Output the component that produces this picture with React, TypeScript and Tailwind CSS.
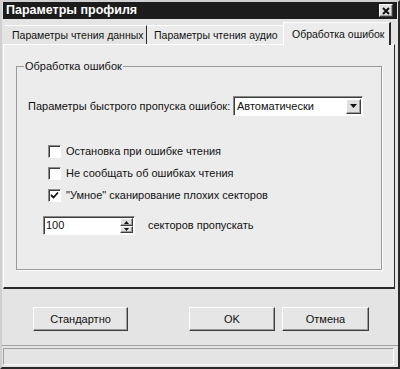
import React from "react";

const raised =
  "border border-t-white border-l-white border-r-[#3c3c3c] border-b-[#3c3c3c] shadow-[inset_-1px_-1px_0_#9c9c9c]";
const sunken =
  "border border-t-[#8a8a8a] border-l-[#8a8a8a] border-r-white border-b-white shadow-[inset_1px_1px_0_#3c3c3c]";

function Check({ checked, label }: { checked?: boolean; label: string }) {
  return (
    <div className="flex h-[22px] items-center pl-[31px]">
      <div className={`w-[13px] h-[13px] bg-white ${sunken} flex items-center justify-center`}>
        {checked && (
          <svg width="9" height="9" viewBox="0 0 9 9">
            <path d="M1 4 L3.5 6.5 L8 1.5" stroke="#111" strokeWidth="1.8" fill="none" />
          </svg>
        )}
      </div>
      <span className="ml-[5px]">{label}</span>
    </div>
  );
}

function Button({ label, w }: { label: string; w: string }) {
  return (
    <div className={`${w} h-[24px] ${raised} bg-[#e6e6e6] flex items-center justify-center`}>
      {label}
    </div>
  );
}

export default function App() {
  return (
    <div className="w-[400px] h-[369px] bg-[#e4e4e4] flex flex-col border-t-2 border-l-2 border-t-[#d0d0d0] border-l-[#cfcfcf] border-r-2 border-b-2 border-r-[#2a2a2a] border-b-[#2a2a2a] text-[11px] leading-[13px] text-[#111] font-['Liberation_Sans',Arial,sans-serif] whitespace-nowrap overflow-hidden">
      {/* Title bar */}
      <div className="h-[17px] mx-[1px] bg-[#1c1c1c] flex items-center justify-between pl-[3px] pr-[4px]">
        <span className="text-white font-bold text-[12.5px]">Параметры профиля</span>
        <div className={`w-[14px] h-[13px] bg-[#e0e0e0] ${raised} flex items-center justify-center`}>
          <svg width="8" height="8" viewBox="0 0 8 8">
            <path d="M1 1 L7 7 M7 1 L1 7" stroke="#111" strokeWidth="2" />
          </svg>
        </div>
      </div>

      {/* Tabs */}
      <div className="mt-[3px] ml-[1px] w-[392px] flex items-end h-[22px] pl-[2px] text-[10.5px]">
        <div className="w-[142px] h-[19px] flex items-center pl-[7px] border-r border-r-[#2a2a2a] border-t border-t-white bg-[#e4e4e4]">
          Параметры чтения данных
        </div>
        <div className="w-[136px] h-[19px] flex items-center pl-[7px] border-t border-t-white bg-[#ebebeb]">
          Параметры чтения аудио
        </div>
        <div className="relative z-10 -mb-px w-[108px] h-[23px] flex items-center pl-[8px] border-t border-l border-t-white border-l-white border-r-2 border-r-[#2a2a2a] bg-[#ececec]">
          Обработка ошибок
        </div>
      </div>

      {/* Panel */}
      <div className="ml-[1px] w-[392px] h-[245px] bg-[#ececec] border border-t-white border-l-white border-r-[#2a2a2a] border-b-[#2a2a2a] border-b-2 pl-[12px] pt-[15px]">
        <fieldset className="w-[366px] h-[210px] border border-[#9a9a9a] shadow-[1px_1px_0_#fff]">
          <legend className="ml-[7px] px-[1px]">Обработка ошибок</legend>

          <div className="mt-[23px] flex items-center pl-[11px] h-[20px]">
            <span className="w-[197px]">Параметры быстрого пропуска ошибок:</span>
            <div className={`ml-[8px] w-[130px] h-[20px] bg-white ${sunken} flex items-center justify-between pl-[3px] pr-[1px]`}>
              <span>Автоматически</span>
              <div className={`w-[15px] h-[15px] bg-[#e0e0e0] ${raised} flex items-center justify-center`}>
                <svg width="7" height="4" viewBox="0 0 7 4">
                  <path d="M0 0 H7 L3.5 4 Z" fill="#111" />
                </svg>
              </div>
            </div>
          </div>

          <div className="mt-[24px] flex flex-col">
            <Check label="Остановка при ошибке чтения" />
            <Check label="Не сообщать об ошибках чтения" />
            <Check checked label={'"Умное" сканирование плохих секторов'} />
          </div>

          <div className="mt-[10px] flex items-center pl-[26px] h-[19px]">
            <div className={`w-[92px] h-[19px] bg-white ${sunken} flex items-center justify-between pl-[2px] pr-[1px]`}>
              <span>100</span>
              <div className="flex flex-col w-[13px] h-[15px]">
                <div className={`h-[8px] bg-[#e0e0e0] ${raised} flex items-center justify-center`}>
                  <svg width="5" height="3" viewBox="0 0 5 3">
                    <path d="M0 3 H5 L2.5 0 Z" fill="#111" />
                  </svg>
                </div>
                <div className={`h-[7px] bg-[#e0e0e0] ${raised} flex items-center justify-center`}>
                  <svg width="5" height="3" viewBox="0 0 5 3">
                    <path d="M0 0 H5 L2.5 3 Z" fill="#111" />
                  </svg>
                </div>
              </div>
            </div>
            <span className="ml-[13px]">секторов пропускать</span>
          </div>
        </fieldset>
      </div>

      {/* Buttons */}
      <div className="flex pt-[18px] h-[56px]">
        <div className="ml-[31px]">
          <Button label="Стандартно" w="w-[95px]" />
        </div>
        <div className="ml-[61px]">
          <Button label="OK" w="w-[86px]" />
        </div>
        <div className="ml-[7px]">
          <Button label="Отмена" w="w-[87px]" />
        </div>
      </div>

      {/* Status bar */}
      <div className="flex-1 border-t border-t-[#a0a0a0] pt-[2px] px-[1px]">
        <div className="h-[17px] w-[391px] border border-t-[#a0a0a0] border-l-[#a0a0a0] border-r-white border-b-white" />
      </div>
    </div>
  );
}
